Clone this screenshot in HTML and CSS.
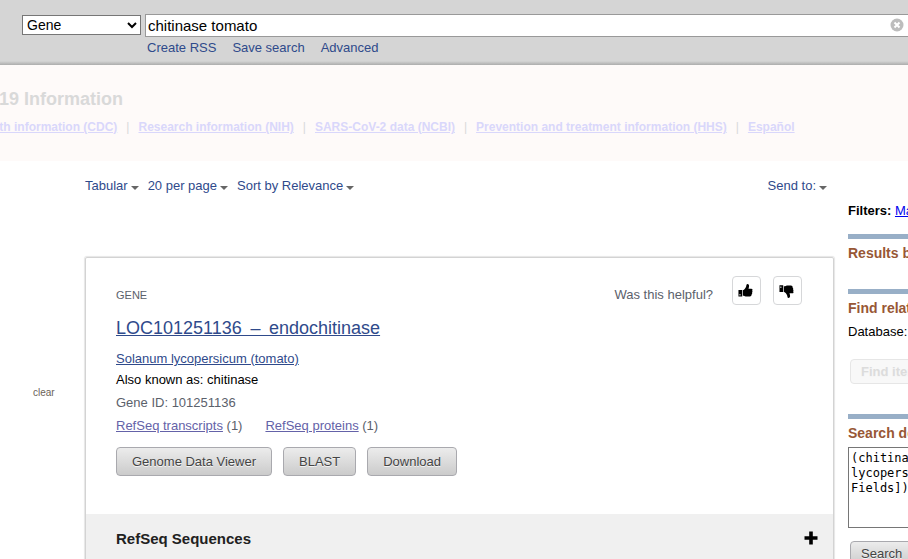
FILE: index.html
```html
<!DOCTYPE html>
<html lang="en">
<head>
<meta charset="utf-8">
<title>chitinase tomato - Gene</title>
<link rel="stylesheet" href="styles.css">
</head>
<body>
<header class="search-bar">
  <form class="search-form">
    <select class="database" aria-label="Database"><option>Gene</option></select>
    <div class="term">
      <input class="term-input" type="text" aria-label="Search term" value="chitinase tomato">
      <button class="term-clear" type="button" aria-label="Clear">
        <svg width="14" height="14" viewBox="0 0 14 14"><circle cx="7" cy="7" r="6.5" fill="#bdbdbd"/><path d="M4.5 4.5l5 5M9.5 4.5l-5 5" stroke="#fff" stroke-width="2"/></svg>
      </button>
    </div>
  </form>
  <nav class="search-links">
    <a href="#">Create RSS</a>
    <a href="#">Save search</a>
    <a href="#">Advanced</a>
  </nav>
</header>

<section class="banner">
  <h2 class="banner-title">COVID-19 Information</h2>
  <nav class="banner-links">
    <a href="#">Public health information (CDC)</a><span>|</span>
    <a href="#">Research information (NIH)</a><span>|</span>
    <a href="#">SARS-CoV-2 data (NCBI)</a><span>|</span>
    <a href="#">Prevention and treatment information (HHS)</a><span>|</span>
    <a href="#">Español</a>
  </nav>
</section>

<div class="columns">
  <div class="facets"><a class="facet-clear" href="#">clear</a></div>

  <main class="results">
    <div class="display-bar">
      <a class="menu" href="#">Tabular</a>
      <a class="menu" href="#">20 per page</a>
      <a class="menu" href="#">Sort by Relevance</a>
      <a class="menu menu-send" href="#">Send to:</a>
    </div>

    <article class="card">
      <div class="card-body">
        <div class="card-top">
          <span class="kind">GENE</span>
          <div class="feedback">
            <span>Was this helpful?</span>
            <button class="vote" type="button" aria-label="Yes">
              <svg width="15" height="15" viewBox="0 0 16 16"><path fill-rule="evenodd" d="M0.5 7.5h4v7h-4zM1.6 11.7v1.6h1v-1.6z"/><path d="M5.2 7.7C7 7 8 5.2 8.6 3.9C9 2.8 8.9 1 10.1 1c1.5 0 2 1.5 1.6 3.2L11.2 6h2.9c1.5 0 1.8 1.6.9 2.3c.7.6.6 1.7-.1 2.1c.5.7.2 1.6-.5 1.9c.3 1.2-.5 2-1.7 2H9.4c-1.7 0-2.5-.8-4.2-.8z"/></svg>
            </button>
            <button class="vote" type="button" aria-label="No">
              <svg width="15" height="15" viewBox="0 0 16 16"><path fill-rule="evenodd" d="M0.5 2.5h4v7h-4zM1.5 3.6v1.7h1V3.6z"/><path d="M5.2 9.3C7 10 8 11.8 8.6 13.1C9 14.2 8.9 16 10.1 16c1.5 0 2-1.5 1.6-3.2L11.2 11h2.9c1.5 0 1.8-1.6.9-2.3c.7-.6.6-1.7-.1-2.1c.5-.7.2-1.6-.5-1.9c.3-1.2-.5-2-1.7-2H9.4c-1.7 0-2.5.8-4.2.8z"/></svg>
            </button>
          </div>
        </div>
        <h1 class="gene-title"><a href="#">LOC101251136&nbsp;&thinsp;–&thinsp;&nbsp;endochitinase</a></h1>
        <p class="organism"><a href="#">Solanum lycopersicum (tomato)</a></p>
        <p class="alias">Also known as: chitinase</p>
        <p class="gene-id">Gene ID: 101251136</p>
        <p class="refs">
          <span><a href="#">RefSeq transcripts</a> (1)</span>
          <span><a href="#">RefSeq proteins</a> (1)</span>
        </p>
        <div class="actions">
          <button class="button" type="button">Genome Data Viewer</button>
          <button class="button" type="button">BLAST</button>
          <button class="button" type="button">Download</button>
        </div>
      </div>
      <button class="accordion" type="button">
        <span>RefSeq Sequences</span>
        <svg width="14" height="14" viewBox="0 0 14 14"><path d="M7 .5v13M.5 7h13" stroke="#000" stroke-width="3.6"/></svg>
      </button>
    </article>
  </main>

  <aside class="side">
    <p class="filters"><b>Filters:</b> <a href="#">Manage Filters</a></p>
    <section class="portlet">
      <h3>Results by taxon</h3>
    </section>
    <section class="portlet related">
      <h3>Find related data</h3>
      <p>Database:</p>
      <button class="button side-button" type="button" disabled>Find items</button>
    </section>
    <section class="portlet">
      <h3><label for="details">Search details</label></h3>
      <textarea class="details" id="details" wrap="off">(chitinase[All Fields] AND
lycopersicum[All
Fields])</textarea>
      <button class="button side-button" type="button">Search</button>
    </section>
  </aside>
</div>
</body>
</html>
```

FILE: styles.css
```css
* { box-sizing: border-box; }
html, body { height: 100%; }
body {
  margin: 0;
  overflow: hidden;
  background: #fff;
  color: #000;
  font: 13px/16px "Liberation Sans", Arial, sans-serif;
}
h1, h2, h3, p { margin: 0; font-size: 13px; }
a { color: #2f4a8b; text-decoration: none; }
button { font-family: inherit; cursor: pointer; }

.search-bar {
  height: 65px;
  padding: 14px 0 0 22px;
  background: linear-gradient(#d5d5d5 0, #d5d5d5 61px, #acacac 65px);
}
.search-form { display: flex; gap: 4px; align-items: flex-start; }
.database {
  width: 119px;
  height: 20px;
  margin-top: 1px;
  padding: 0;
  border: 1px solid #767676;
  border-radius: 0;
  background: #fff;
  color: #000;
  font: 14px "Liberation Sans", Arial, sans-serif;
}
.term {
  display: flex;
  flex: 1;
  align-items: center;
  height: 23px;
  border: 1px solid #999;
  border-right: 0;
  background: #fff;
}
.term-input {
  flex: 1;
  min-width: 0;
  padding: 0 2px;
  border: 0;
  outline: 0;
  background: none;
  color: #000;
  font: 15px "Liberation Sans", Arial, sans-serif;
}
.term-clear { display: flex; margin: 0 4px 2px 0; padding: 0; border: 0; background: none; }
.search-links { display: flex; gap: 16px; padding: 3px 0 0 125px; }

.banner {
  height: 96px;
  margin-left: -64px;
  padding-top: 24px;
  background: #fefaf9;
  color: #d9d9d9;
  white-space: nowrap;
}
.banner-title { font-size: 18px; line-height: 20px; }
.banner-links { display: flex; gap: 9px; margin-top: 10px; font-size: 12px; }
.banner-links a { color: #d9d7fb; font-weight: bold; text-decoration: underline; }

.columns { display: flex; align-items: flex-start; }
.facets { width: 85px; padding: 226px 0 0 33px; font-size: 10px; line-height: 12px; }
.facet-clear { color: #6b6258; }
.results { flex: 1; min-width: 0; }
.display-bar { display: flex; gap: 9px; padding: 17px 7px 0 0; }
.menu::after {
  content: "";
  display: inline-block;
  margin-left: 3px;
  border: 4px solid transparent;
  border-top-color: #666;
  border-bottom: 0;
}
.menu-send { margin-left: auto; }

.card {
  margin-top: 63px;
  border: 1px solid #d3d3d3;
  border-radius: 2px;
  box-shadow: 0 0 1px 1px #e6e6e6;
}
.card-body { padding: 18px 31px 38px 30px; }
.card-top { display: flex; justify-content: space-between; align-items: center; }
.kind { margin-top: 8px; color: #5b616b; font-size: 11px; line-height: 12px; }
.feedback { display: flex; align-items: center; gap: 12px; color: #5b616b; }
.feedback span { margin: 8px 7px 0 0; }
.vote {
  display: flex;
  align-items: center;
  justify-content: center;
  width: 29px;
  height: 29px;
  padding: 0 2px 0 0;
  border: 1px solid #d6d7d9;
  border-radius: 4px;
  background: #fff;
}
.gene-title { margin-top: 12px; font-size: 18px; font-weight: normal; line-height: 22px; }
.gene-title a, .organism a, .refs a { text-decoration: underline; }
.organism { margin-top: 12px; }
.alias { margin-top: 5px; }
.gene-id { margin-top: 7px; color: #5b616b; }
.refs { display: flex; gap: 23px; margin-top: 7px; color: #5b616b; }
.refs a { color: #6462a8; }
.actions { display: flex; gap: 11px; margin-top: 13px; }
.button {
  height: 29px;
  padding: 0 15px;
  border: 1px solid #a9a9ae;
  border-radius: 4px;
  background: linear-gradient(#ececec, #cbcbcb);
  color: #444;
  font-size: 13px;
  text-shadow: 0 1px #f5f5f5;
  white-space: nowrap;
}
.accordion {
  display: flex;
  justify-content: space-between;
  align-items: center;
  width: 100%;
  height: 48px;
  padding: 0 15px 0 30px;
  border: 0;
  background: #f0f0f0;
  color: #212121;
  font-size: 15px;
  font-weight: bold;
}

.side { width: 60px; margin-left: 14px; padding-top: 42px; overflow: hidden; white-space: nowrap; }
.filters a { color: #00e; text-decoration: underline; }
.portlet { margin-top: 15px; padding-bottom: 13px; border-top: 5px solid #98afc7; }
.portlet h3 { padding-top: 6px; color: #985735; font-size: 14px; }
.portlet p { margin-top: 8px; }
.side-button { display: block; height: 25px; margin: 19px 0 0 2px; padding: 0 10px; }
.side-button:disabled { border-color: #e6e6e6; background: #f8f8f8; color: #dcdcdc; font-weight: bold; }
.related { padding-bottom: 15px; }
.details {
  display: block;
  width: 240px;
  height: 81px;
  margin-top: 6px;
  padding: 3px 2px;
  border: 1px solid #767676;
  overflow: hidden;
  resize: none;
  font: 12px/15px "DejaVu Sans Mono", monospace;
}
.details + .side-button { height: 25px; margin-top: 13px; }
```
